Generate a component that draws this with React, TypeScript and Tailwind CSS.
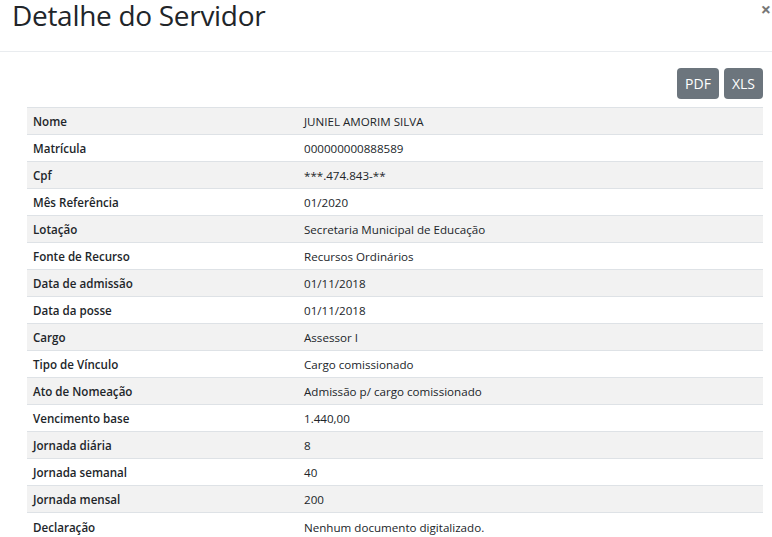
import React from 'react';

const rows: [string, string][] = [
  ['Nome', 'JUNIEL AMORIM SILVA'],
  ['Matrícula', '000000000888589'],
  ['Cpf', '***.474.843-**'],
  ['Mês Referência', '01/2020'],
  ['Lotação', 'Secretaria Municipal de Educação'],
  ['Fonte de Recurso', 'Recursos Ordinários'],
  ['Data de admissão', '01/11/2018'],
  ['Data da posse', '01/11/2018'],
  ['Cargo', 'Assessor I'],
  ['Tipo de Vínculo', 'Cargo comissionado'],
  ['Ato de Nomeação', 'Admissão p/ cargo comissionado'],
  ['Vencimento base', '1.440,00'],
  ['Jornada diária', '8'],
  ['Jornada semanal', '40'],
  ['Jornada mensal', '200'],
  ['Declaração', 'Nenhum documento digitalizado.'],
];

export default function App() {
  return (
    <div className="w-[772px] h-[537px] overflow-hidden bg-white text-[#212529] font-['Open_Sans',sans-serif]">
      {/* Header */}
      <div className="flex items-start justify-between h-[52px] border-b border-[#e9ecef] pl-[12px]">
        <h4 className="text-[28px] leading-[30px] font-normal text-[#212529] tracking-[-0.3px]">
          Detalhe do Servidor
        </h4>
        <span className="text-[#777] text-[18px] leading-[18px] font-bold mr-[1px]">×</span>
      </div>

      {/* Body */}
      <div className="pl-[27px] pr-[9px]">
        <div className="flex justify-end gap-[5px] pt-[16px] pb-[8px]">
          <button className="h-[31px] px-[8px] rounded-[4px] bg-[#6c757d] text-white text-[14px]">PDF</button>
          <button className="h-[31px] px-[8px] rounded-[4px] bg-[#6c757d] text-white text-[14px]">XLS</button>
        </div>
        <table className="w-full border-collapse text-[11.6px]">
          <tbody>
            {rows.map(([label, value], i) => (
              <tr key={label} className={i % 2 === 0 ? 'bg-[#f2f2f2]' : 'bg-white'}>
                <td className="h-[27px] w-[272px] border-t border-[#dee2e6] pl-[6px] pt-[2px] font-semibold align-middle">
                  {label}
                </td>
                <td className="h-[27px] border-t border-[#dee2e6] pl-[5px] pt-[2px] align-middle">{value}</td>
              </tr>
            ))}
          </tbody>
        </table>
      </div>
    </div>
  );
}
